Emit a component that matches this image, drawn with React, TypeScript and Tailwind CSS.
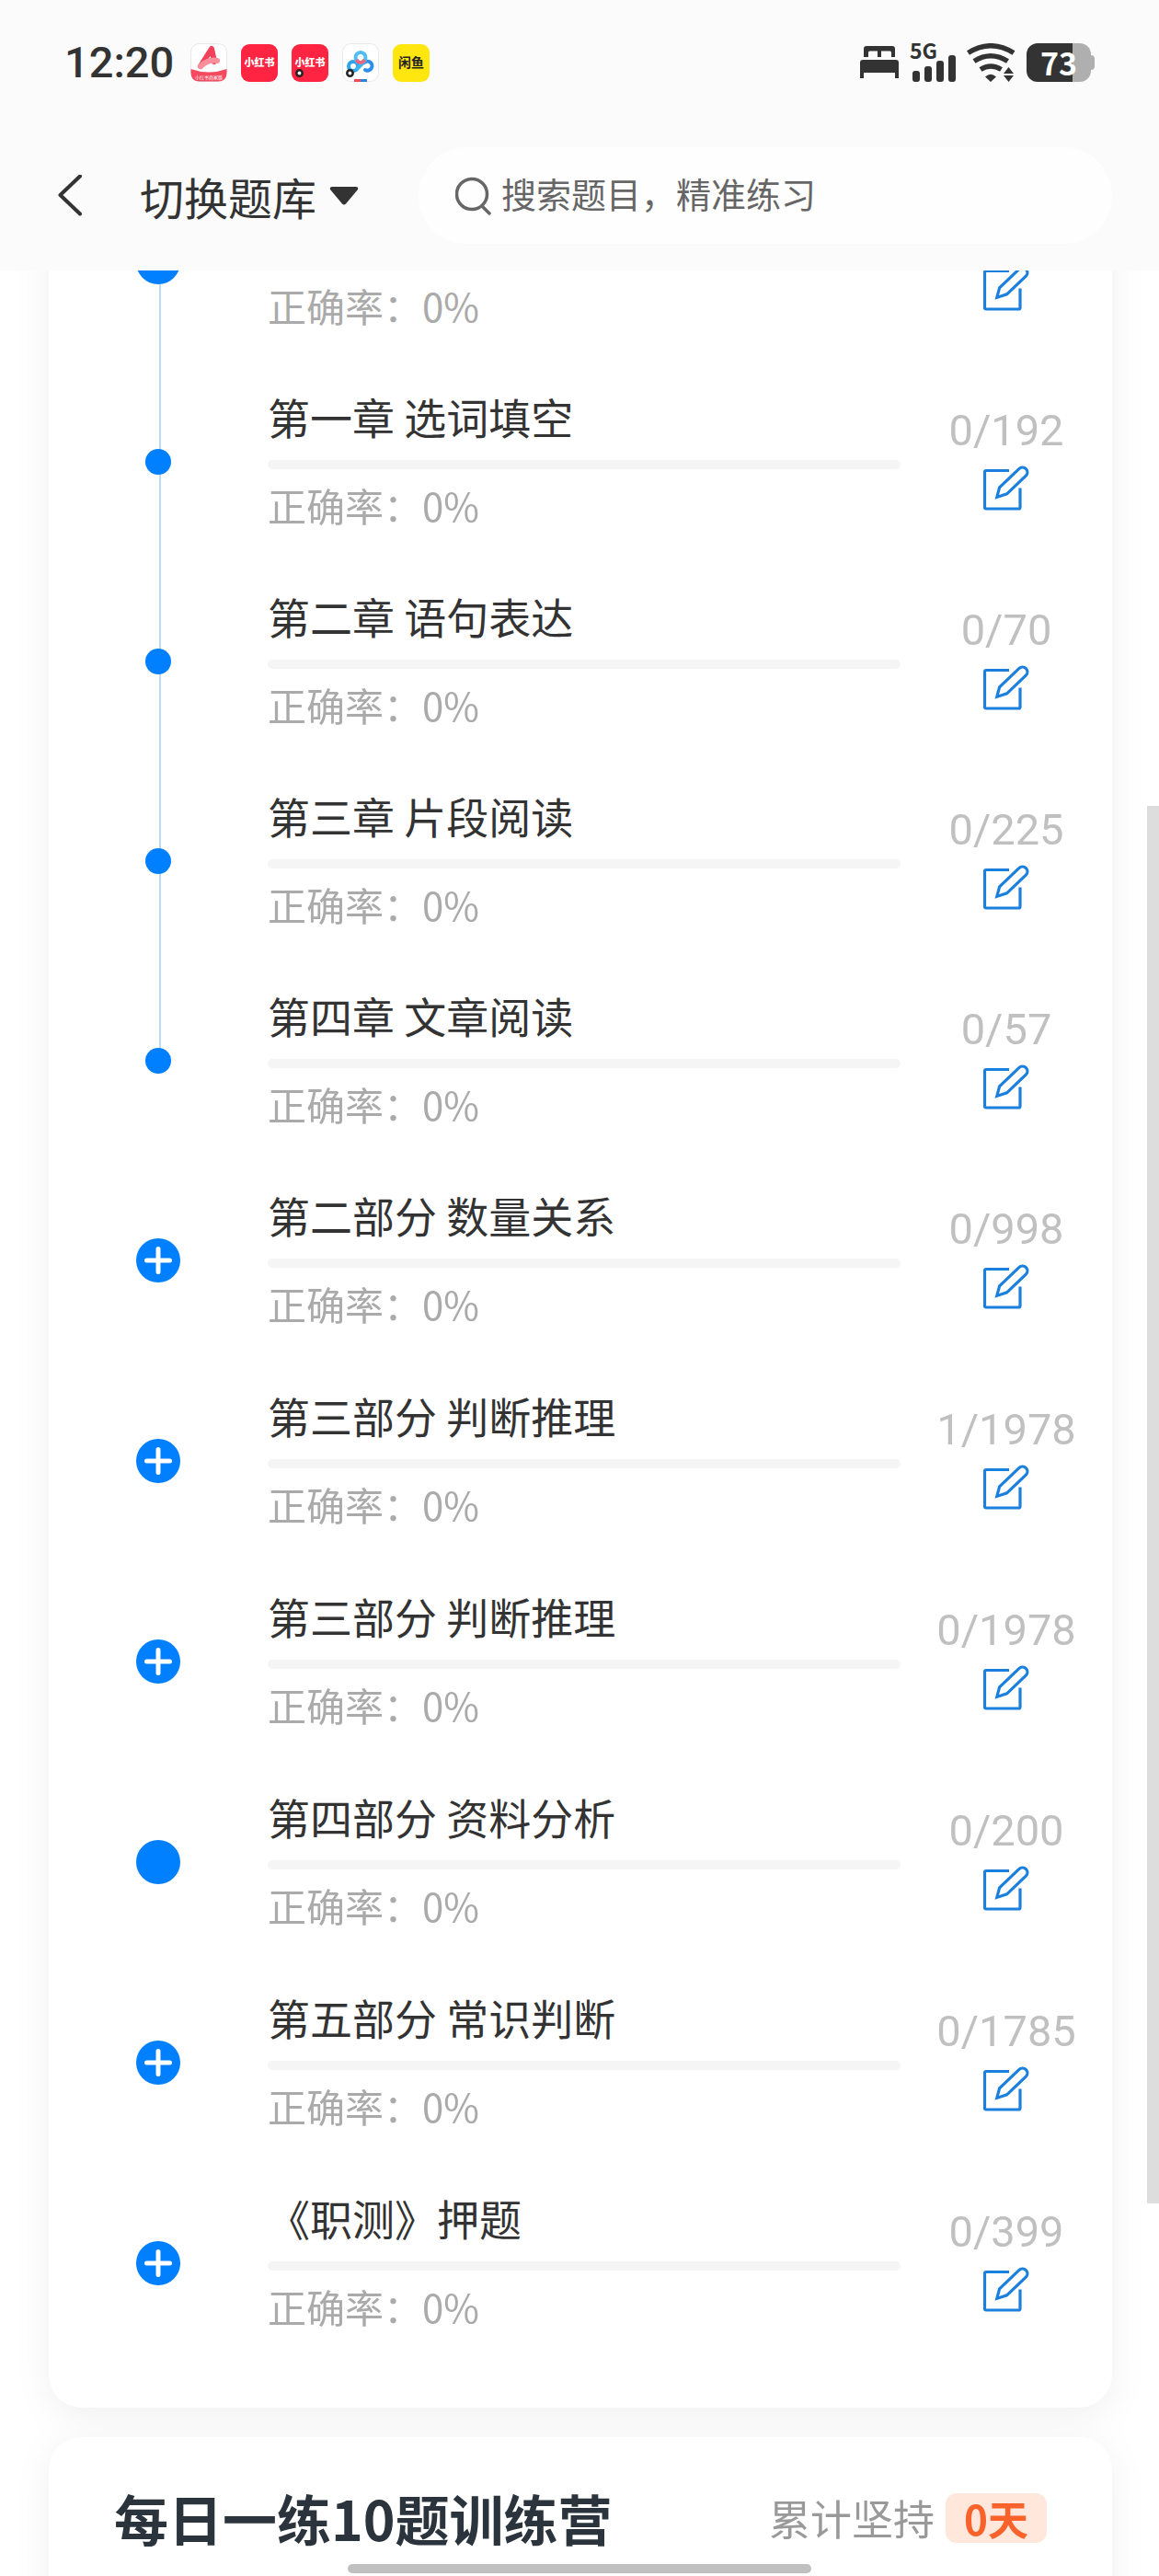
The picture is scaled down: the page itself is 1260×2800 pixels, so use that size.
import { useState } from "react";

interface Chapter {
  id: number;
  title: string;
  count: string;
  rate: number;
  kind: "dot" | "plus" | "solid";
  // which halves of the tree line are drawn through the marker
  line?: "top" | "bottom" | "full";
}

const chapters: Chapter[] = [
  { id: 0, title: "", count: "", rate: 0, kind: "solid", line: "bottom" },
  { id: 1, title: "第一章 选词填空", count: "0/192", rate: 0, kind: "dot", line: "full" },
  { id: 2, title: "第二章 语句表达", count: "0/70", rate: 0, kind: "dot", line: "full" },
  { id: 3, title: "第三章 片段阅读", count: "0/225", rate: 0, kind: "dot", line: "full" },
  { id: 4, title: "第四章 文章阅读", count: "0/57", rate: 0, kind: "dot", line: "top" },
  { id: 5, title: "第二部分 数量关系", count: "0/998", rate: 0, kind: "plus" },
  { id: 6, title: "第三部分 判断推理", count: "1/1978", rate: 0, kind: "plus" },
  { id: 7, title: "第三部分 判断推理", count: "0/1978", rate: 0, kind: "plus" },
  { id: 8, title: "第四部分 资料分析", count: "0/200", rate: 0, kind: "solid" },
  { id: 9, title: "第五部分 常识判断", count: "0/1785", rate: 0, kind: "plus" },
  { id: 10, title: "《职测》押题", count: "0/399", rate: 0, kind: "plus" },
];

const lineClass = {
  top: "top-0 h-1/2",
  bottom: "top-1/2 h-1/2",
  full: "top-0 h-full",
};

function EditIcon() {
  return (
    <svg viewBox="0 0 50 50" className="w-[50px] h-[50px]" fill="none" stroke="#1b7fdd" strokeWidth="3.2">
      <path d="M28 5.5H3Q1.5 5.5 1.5 7V45.5Q1.5 47 3 47H38.5Q40 47 40 45.5V24.5" />
      <path d="M14.8 34.4L17.6 23.8L38.8 3.6A5.3 5.3 0 0 1 46.3 11.2L25.6 30.8Z" />
    </svg>
  );
}

function AppIcons() {
  return (
    <div className="flex items-center gap-[15px]">
      <svg viewBox="0 0 40 42" className="w-10 h-[42px]">
        <rect x="0.5" y="0.5" width="39" height="41" rx="9" fill="#fff" stroke="#e8e8e8" />
        <path d="M0.5 28Q20 35 39.5 28V32Q39.5 41.5 30 41.5H10Q0.5 41.5 0.5 32Z" fill="#f5495f" />
        <path d="M11 25L23 6L26 20" fill="none" stroke="#f2415b" strokeWidth="6" strokeLinecap="round" strokeLinejoin="round" />
        <path d="M11 25Q20 17 29 19" fill="none" stroke="#fb8f9c" strokeWidth="6" strokeLinecap="round" />
        <text x="20" y="39" fontSize="5" fill="#fff" textAnchor="middle">小红书商家版</text>
      </svg>
      <svg viewBox="0 0 40 42" className="w-10 h-[42px]">
        <rect y="1" width="40" height="41" rx="9" fill="#ff2442" />
        <text x="20" y="25" fontSize="11" fontWeight="900" fill="#fff" textAnchor="middle">小红书</text>
      </svg>
      <svg viewBox="0 0 40 42" className="w-10 h-[42px]">
        <rect y="1" width="40" height="41" rx="9" fill="#ff2442" />
        <text x="20" y="25" fontSize="11" fontWeight="900" fill="#fff" textAnchor="middle">小红书</text>
        <circle cx="8.5" cy="32.5" r="3.2" fill="#fff" stroke="#222" strokeWidth="2.5" />
      </svg>
      <svg viewBox="0 0 40 42" className="w-10 h-[42px]">
        <rect x="0.5" y="0.5" width="39" height="41" rx="9" fill="#fff" stroke="#e8e8e8" />
        <g fill="none" strokeWidth="4">
          <circle cx="12" cy="25" r="5" stroke="#2fa5e8" />
          <path d="M24 21A5 5 0 1 1 25 29" stroke="#2f8fe8" strokeLinecap="round" />
          <path d="M15 29L24 20" stroke="#3cb4ee" />
          <path d="M17 20A5.5 5.5 0 1 1 23 20" stroke="#4dbdf2" />
          <path d="M15.5 18Q20 24 24.5 18" stroke="#e8697f" />
        </g>
        <circle cx="8.5" cy="32.5" r="3.2" fill="#fff" stroke="#222" strokeWidth="2.5" />
        <path d="M13 39H20V42H13Z" fill="#ee4a5a" />
        <path d="M20 39H27V42H20Z" fill="#2f7fe0" />
      </svg>
      <svg viewBox="0 0 40 42" className="w-10 h-[42px]">
        <rect y="1" width="40" height="41" rx="9" fill="#ffe60f" />
        <text x="20" y="26" fontSize="14" fontWeight="700" fill="#222" textAnchor="middle">闲鱼</text>
      </svg>
    </div>
  );
}

function StatusBar() {
  return (
    <div className="flex items-center h-[136px] px-[70px] text-[#333]">
      <span className="font-['Roboto',sans-serif] font-medium text-[47px] leading-[56px]">12:20</span>
      <div className="ml-[18px]">
        <AppIcons />
      </div>
      <div className="ml-auto flex items-center gap-3">
        <svg viewBox="0 0 42 36" className="w-[42px] h-9" fill="#333">
          <path d="M4 12V3Q4 0 7 0H35Q38 0 38 3V12H34V7Q34 5.5 32.5 5.5H23V12H19V5.5H10.5Q9 5.5 9 7V12Z" />
          <path d="M0 35V18Q0 15 3 15H39Q42 15 42 18V35H38V29H4V35Z" />
        </svg>
        <svg viewBox="0 0 50 42" className="w-[50px] h-[42px] overflow-visible" fill="#333">
          <text x="0" y="17" fontSize="23" fontWeight="700">5G</text>
          <rect x="3" y="30" width="8" height="12" rx="3" />
          <rect x="16" y="25" width="8" height="17" rx="3" />
          <rect x="29" y="19" width="8" height="23" rx="3" />
          <rect x="42" y="13" width="8" height="29" rx="3" />
        </svg>
        <svg viewBox="0 0 53 42" className="w-[53px] h-[42px]" fill="none" stroke="#333" strokeWidth="5.5">
          <path d="M1.5 10.5Q26 -5 51 10.5" />
          <path d="M8 19.5Q26 8 44.5 19.5" />
          <path d="M15 28.5Q26 21.5 37.5 28.5" />
          <path d="M20 36.5Q26 31 32 36.5L26 42ZM40 33L45.5 26L51 33ZM40 35H51L45.5 42Z" fill="#333" stroke="none" />
        </svg>
        <div className="flex items-center">
          <div className="flex items-center justify-center w-[70px] h-[42px] rounded-xl bg-[linear-gradient(90deg,#333_50px,#afafaf_50px)]">
            <span className="font-bold text-[34px] leading-[42px] text-white">73</span>
          </div>
          <div className="w-1 h-4 rounded-r bg-[#afafaf]" />
        </div>
      </div>
    </div>
  );
}

function NavBar() {
  const [keyword, setKeyword] = useState("");
  return (
    <div className="flex items-center pt-6 pb-[29px] pl-[63px] pr-[51px]">
      <button aria-label="返回" className="shrink-0">
        <svg viewBox="0 0 28 46" className="w-7 h-[46px]" fill="none" stroke="#333" strokeWidth="4" strokeLinecap="round" strokeLinejoin="round">
          <path d="M24 1.5L2.5 22L24 42.5" />
        </svg>
      </button>
      <button className="ml-[61px] flex shrink-0 items-center gap-3.5 text-[48px] leading-[64px] text-[#333]">
        切换题库
        <svg viewBox="0 0 32 20" className="w-8 h-5" fill="#333">
          <path d="M3 0H29Q32 0 31 3L18 18.5Q16 20.5 14 18.5L1 3Q0 0 3 0Z" />
        </svg>
      </button>
      <label className="ml-[65px] flex h-[105px] min-w-0 flex-1 items-center gap-2.5 rounded-full bg-[#fefefe] pl-10 pr-10">
        <svg viewBox="0 0 40 42" className="w-10 h-[42px] shrink-0" fill="none" stroke="#666" strokeWidth="3.5" strokeLinecap="round">
          <circle cx="18" cy="19" r="16.5" />
          <path d="M29 32L37 40" />
        </svg>
        <input
          type="text"
          aria-label="搜索题目"
          value={keyword}
          onChange={(e) => setKeyword(e.target.value)}
          placeholder="搜索题目，精准练习"
          className="min-w-0 flex-1 bg-transparent pb-1.5 text-[38px] leading-[56px] text-[#333] outline-none placeholder:text-[#666]"
        />
      </label>
    </div>
  );
}

function Marker({ kind }: { kind: Chapter["kind"] }) {
  if (kind === "dot") {
    return <span className="relative w-7 h-7 rounded-full bg-[#007fff]" />;
  }
  return (
    <button aria-label="展开" className="relative flex items-center justify-center w-12 h-12 rounded-full bg-[#007fff]">
      {kind === "plus" && (
        <svg viewBox="0 0 30 30" className="w-[30px] h-[30px]" stroke="#fff" strokeWidth="5" strokeLinecap="round">
          <path d="M15 2.5V27.5M2.5 15H27.5" />
        </svg>
      )}
    </button>
  );
}

function ChapterRow({ chapter }: { chapter: Chapter }) {
  const isChild = chapter.line !== undefined;
  return (
    <li className={isChild ? "flex h-[217px]" : "flex h-[218px]"}>
      <div className="relative flex w-[238px] shrink-0 items-center justify-center">
        {chapter.line && <span className={`absolute left-[120px] w-0.5 bg-[#b9dbf6] ${lineClass[chapter.line]}`} />}
        <Marker kind={chapter.kind} />
      </div>
      <div className="min-w-0 flex-1 pt-[27px]">
        <h3 className="h-16 truncate text-[46px] leading-[64px] text-[#333]">{chapter.title}</h3>
        <div className="mt-4 h-2.5 rounded-full bg-[#f5f5f5] overflow-hidden">
          <div className="h-full bg-[#007fff]" style={{ width: `${chapter.rate}%` }} />
        </div>
        <p className="mt-3 text-[42px] leading-[54px] text-[#aaa]">正确率：{chapter.rate}%</p>
      </div>
      <div className="flex w-[230px] shrink-0 flex-col items-center pt-[47px]">
        <span className="h-14 font-['Roboto',sans-serif] text-[47px] leading-[56px] text-[#c0c0c0]">{chapter.count}</span>
        <button aria-label="开始练习" className="mt-2.5">
          <EditIcon />
        </button>
      </div>
    </li>
  );
}

export default function App() {
  return (
    <div className="relative flex h-screen flex-col overflow-hidden bg-white font-['Noto_Sans_CJK_SC',sans-serif]">
      <header className="shrink-0 bg-[#fbfbfb]">
        <StatusBar />
        <NavBar />
      </header>

      <main className="min-h-0 flex-1 overflow-hidden">
        {/* list is scrolled part way through its first row */}
        <div className="-mt-[118px] pl-[53px] pr-[51px] drop-shadow-[0_8px_18px_rgba(0,0,0,0.06)]">
          <section className="rounded-b-[36px] bg-white pb-12">
            <ul>
              {chapters.map((chapter) => (
                <ChapterRow key={chapter.id} chapter={chapter} />
              ))}
            </ul>
          </section>

          <section className="mt-8 rounded-[36px] bg-white pt-14 pb-40 px-[71px]">
            <div className="flex items-center justify-between">
              <h2 className="text-[59px] leading-[64px] font-bold text-[#2b343c]">每日一练10题训练营</h2>
              <div className="flex items-center gap-3">
                <span className="text-[45px] leading-[54px] text-[#999]">累计坚持</span>
                <span className="rounded-xl bg-[#ffe7dc] px-5 text-[44px] leading-[54px] font-bold text-[#f9622b]">0天</span>
              </div>
            </div>
          </section>
        </div>
      </main>

      {/* scroll thumb and home indicator float over the page */}
      <div className="absolute right-0 top-[876px] h-[1519px] w-[13px] bg-[#ddd]" />
      <div className="absolute bottom-[3px] left-1/2 h-2.5 w-[504px] -translate-x-1/2 rounded-full bg-[#c0c0c0]" />
    </div>
  );
}
